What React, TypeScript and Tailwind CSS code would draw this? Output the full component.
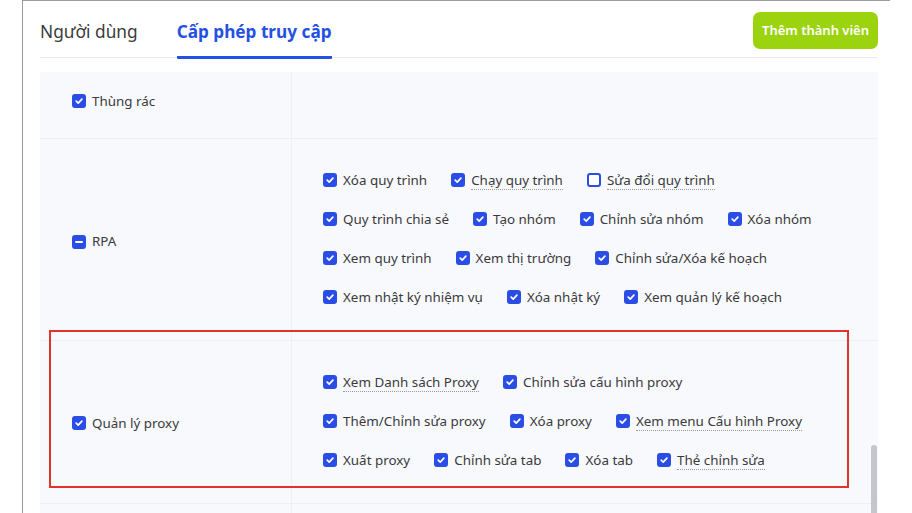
import React from "react";

type Item = { label: string; checked?: boolean; dotted?: boolean };

const rpaRows: Item[][] = [
  [
    { label: "Xóa quy trình", checked: true },
    { label: "Chạy quy trình", checked: true, dotted: true },
    { label: "Sửa đổi quy trình", checked: false, dotted: true },
  ],
  [
    { label: "Quy trình chia sẻ", checked: true },
    { label: "Tạo nhóm", checked: true },
    { label: "Chỉnh sửa nhóm", checked: true },
    { label: "Xóa nhóm", checked: true },
  ],
  [
    { label: "Xem quy trình", checked: true },
    { label: "Xem thị trường", checked: true },
    { label: "Chỉnh sửa/Xóa kế hoạch", checked: true },
  ],
  [
    { label: "Xem nhật ký nhiệm vụ", checked: true },
    { label: "Xóa nhật ký", checked: true },
    { label: "Xem quản lý kế hoạch", checked: true },
  ],
];

const proxyRows: Item[][] = [
  [
    { label: "Xem Danh sách Proxy", checked: true, dotted: true },
    { label: "Chỉnh sửa cấu hình proxy", checked: true },
  ],
  [
    { label: "Thêm/Chỉnh sửa proxy", checked: true },
    { label: "Xóa proxy", checked: true },
    { label: "Xem menu Cấu hình Proxy", checked: true, dotted: true },
  ],
  [
    { label: "Xuất proxy", checked: true },
    { label: "Chỉnh sửa tab", checked: true },
    { label: "Xóa tab", checked: true },
    { label: "Thẻ chỉnh sửa", checked: true, dotted: true },
  ],
];

function Box({ state }: { state: "checked" | "unchecked" | "partial" }) {
  if (state === "unchecked") {
    return <span className="w-[14px] h-[14px] rounded-[3px] border-2 border-[#2a4de6] bg-white shrink-0" />;
  }
  return (
    <span className="w-[14px] h-[14px] rounded-[3px] bg-[#2a4de6] shrink-0 flex items-center justify-center">
      {state === "checked" ? (
        <svg width="10" height="10" viewBox="0 0 10 10">
          <path d="M2.2 5.2 L4.2 7.1 L7.9 3.1" fill="none" stroke="white" strokeWidth="1.7" strokeLinecap="round" strokeLinejoin="round" />
        </svg>
      ) : (
        <span className="w-[8px] h-[2px] bg-white rounded-full" />
      )}
    </span>
  );
}

function Check({ item }: { item: Item }) {
  return (
    <div className="flex items-center gap-[6px] h-[20px]">
      <Box state={item.checked ? "checked" : "unchecked"} />
      <span
        className={
          "text-[13.4px] leading-[18px] text-[#3a3a3a] whitespace-nowrap " +
          (item.dotted ? "border-b border-dotted border-[#9a9a9a]" : "")
        }
      >
        {item.label}
      </span>
    </div>
  );
}

function Items({ rows }: { rows: Item[][] }) {
  return (
    <div className="flex flex-col gap-[19px] pt-[31px] pb-[33px] pl-[31px]">
      {rows.map((row, i) => (
        <div key={i} className="flex items-center gap-[24px]">
          {row.map((item) => (
            <Check key={item.label} item={item} />
          ))}
        </div>
      ))}
    </div>
  );
}

export default function App() {
  return (
    <div
      className="relative w-[912px] h-[513px] overflow-hidden bg-white"
      style={{ fontFamily: '"Noto Sans", "Open Sans", sans-serif' }}
    >
      <div className="ml-[22px] w-[868px] h-[513px] border-l border-t border-[#9c9c9c] pl-[17px]">
        {/* Header */}
        <div className="flex justify-between items-start w-[838px] h-[57px] border-b border-[#e6e8ee]">
          <div className="flex h-full items-end gap-[39px]">
            <div className="pb-[13px] text-[17.3px] leading-[24px] text-[#3b3b3b]">Người dùng</div>
            <div className="-mb-[2px] pb-[12px] border-b-[3px] border-[#2450e4] rounded-b-[1px] text-[17.2px] leading-[24px] font-bold text-[#2450e4]">
              Cấp phép truy cập
            </div>
          </div>
          <button className="mt-[11px] h-[37px] px-[9px] rounded-[7px] bg-[#9cd30f] text-white text-[13px] font-semibold">
            Thêm thành viên
          </button>
        </div>

        {/* Table */}
        <div className="mt-[14px] w-[838px] bg-[#f8f9fd]">
          <div className="grid grid-cols-[252px_1fr] h-[66px]">
            <div className="pl-[32px] pt-[19px] border-r border-[#eef0f5]">
              <div className="flex items-center gap-[6px] h-[20px]">
                <Box state="checked" />
                <span className="text-[13.4px] text-[#3a3a3a]">Thùng rác</span>
              </div>
            </div>
            <div />
          </div>

          <div className="grid grid-cols-[252px_1fr] border-t border-[#eceef3]">
            <div className="pl-[32px] pt-[4px] flex items-center border-r border-[#eef0f5]">
              <div className="flex items-center gap-[6px] h-[20px]">
                <Box state="partial" />
                <span className="text-[13.4px] text-[#3a3a3a]">RPA</span>
              </div>
            </div>
            <Items rows={rpaRows} />
          </div>

          <div className="relative grid grid-cols-[252px_1fr] border-t border-[#eceef3]">
            <div className="pl-[32px] pt-[2px] flex items-center border-r border-[#eef0f5]">
              <div className="flex items-center gap-[6px] h-[20px]">
                <Box state="checked" />
                <span className="text-[13.4px] text-[#3a3a3a]">Quản lý proxy</span>
              </div>
            </div>
            <Items rows={proxyRows} />
            <div className="absolute -top-[11px] left-[9px] w-[800px] h-[158px] border-2 border-[#e2332b] pointer-events-none" />
          </div>

          <div className="grid grid-cols-[252px_1fr] h-[20px] border-t border-[#eceef3]">
            <div className="border-r border-[#eef0f5]" />
            <div />
          </div>
        </div>
      </div>

      {/* scrollbar */}
      <div className="absolute left-[871px] top-[445px] w-[6px] h-[80px] rounded-full bg-[#c5c6cd]" />
    </div>
  );
}
